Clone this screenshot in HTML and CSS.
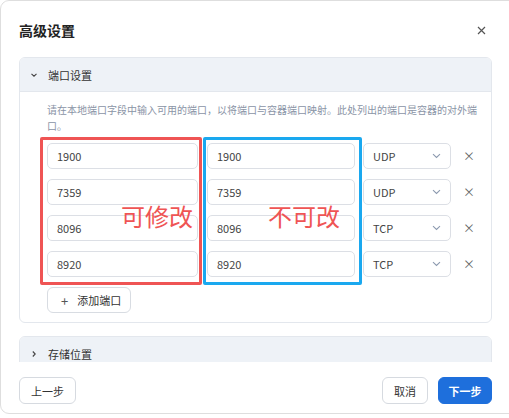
FILE: index.html
```html
<!DOCTYPE html>
<html lang="zh-CN">
<head>
<meta charset="utf-8">
<title>高级设置</title>
<link rel="stylesheet" href="styles.css">
</head>
<body>
<div class="dialog">
  <div class="dlg-head">
    <h1 class="title">高级设置</h1>
    <button class="close" aria-label="关闭">
      <svg width="9" height="9" viewBox="0 0 9 9"><path d="M1 1L8 8M8 1L1 8" stroke="#555" stroke-width="1.2" fill="none"/></svg>
    </button>
  </div>
  <div class="content">
    <section class="panel">
      <div class="panel-head">
        <svg class="chev" width="8" height="8" viewBox="0 0 8 8"><path d="M1.5 2.8L4 5.2L6.5 2.8" stroke="#444" stroke-width="1.1" fill="none"/></svg>
        <span>端口设置</span>
      </div>
      <div class="panel-body">
        <p class="desc">请在本地端口字段中输入可用的端口，以将端口与容器端口映射。此处列出的端口是容器的对外端口。</p>
        <div class="rows">
          <div class="row">
            <div class="input in1">1900</div>
            <div class="input in2">1900</div>
            <div class="select"><span>UDP</span><svg width="9" height="6" viewBox="0 0 9 6"><path d="M1 1.2L4.5 4.5L8 1.2" stroke="#8d9bb0" stroke-width="1.1" fill="none"/></svg></div>
            <span class="del">×</span>
          </div>
          <div class="row">
            <div class="input in1">7359</div>
            <div class="input in2">7359</div>
            <div class="select"><span>UDP</span><svg width="9" height="6" viewBox="0 0 9 6"><path d="M1 1.2L4.5 4.5L8 1.2" stroke="#8d9bb0" stroke-width="1.1" fill="none"/></svg></div>
            <span class="del">×</span>
          </div>
          <div class="row">
            <div class="input in1">8096</div>
            <div class="input in2">8096</div>
            <div class="select"><span>TCP</span><svg width="9" height="6" viewBox="0 0 9 6"><path d="M1 1.2L4.5 4.5L8 1.2" stroke="#8d9bb0" stroke-width="1.1" fill="none"/></svg></div>
            <span class="del">×</span>
          </div>
          <div class="row">
            <div class="input in1">8920</div>
            <div class="input in2">8920</div>
            <div class="select"><span>TCP</span><svg width="9" height="6" viewBox="0 0 9 6"><path d="M1 1.2L4.5 4.5L8 1.2" stroke="#8d9bb0" stroke-width="1.1" fill="none"/></svg></div>
            <span class="del">×</span>
          </div>
        </div>
        <button class="add"><span class="plus">+</span>添加端口</button>
      </div>
    </section>
    <section class="panel panel2">
      <div class="panel-head">
        <svg class="chev" width="8" height="8" viewBox="0 0 8 8"><path d="M2.8 1.5L5.2 4L2.8 6.5" stroke="#444" stroke-width="1.1" fill="none"/></svg>
        <span>存储位置</span>
      </div>
    </section>
  </div>
  <div class="footer">
    <button class="btn btn-prev">上一步</button>
    <div class="right">
      <button class="btn btn-cancel">取消</button>
      <button class="btn primary">下一步</button>
    </div>
  </div>

  <div class="mark mark-red"></div>
  <div class="mark mark-blue"></div>
  <div class="label label-red">可修改</div>
  <div class="label label-blue">不可改</div>
</div>
</body>
</html>
```

FILE: styles.css
```css
* { box-sizing: border-box; }
html, body { margin: 0; padding: 0; background: #fff; }
body {
  width: 509px;
  height: 418px;
  overflow: hidden;
  font-family: "Noto Sans CJK SC", "Noto Sans", sans-serif;
  color: #333;
}
button { font-family: inherit; }

.dialog {
  position: relative;
  width: 530px;
  height: 414px;
  border: 1px solid #dedede;
  border-radius: 9px;
  background: #fff;
}

.dlg-head {
  height: 56px;
  padding: 19px 18px 0 18px;
  display: flex;
  justify-content: space-between;
  align-items: flex-start;
  width: 508px;
}
.title {
  margin: 0;
  font-size: 14px;
  line-height: 20px;
  font-weight: 700;
  color: #222;
}
.close {
  border: 0;
  background: none;
  padding: 0;
  margin-top: 6px;
  margin-right: 5px;
  width: 9px;
  height: 9px;
  display: block;
}
.close svg { display: block; }

.content {
  width: 508px;
  height: 305px;
  overflow: hidden;
  padding: 0 17px 0 18px;
}

.panel {
  border: 1px solid #e3e7ed;
  border-radius: 6px;
  background: #fff;
  overflow: hidden;
}
.panel-head {
  height: 34px;
  background: #eef2f7;
  display: flex;
  align-items: center;
  padding-left: 10px;
  font-size: 11px;
  color: #333;
}
.panel .panel-head { border-bottom: 1px solid #e3e7ed; }
.panel2 { margin-top: 13px; }
.chev { display: block; margin-right: 10px; }

.panel-body {
  padding: 10px 0 9px 27px;
}
.desc {
  margin: 0;
  width: 436px;
  font-size: 10px;
  line-height: 16px;
  color: #8a94a6;
}
.rows {
  margin-top: 9px;
  display: flex;
  flex-direction: column;
  gap: 10px;
}
.row {
  display: flex;
  align-items: center;
  height: 26px;
}
.input, .select {
  height: 26px;
  border: 1px solid #dcdfe5;
  border-radius: 5px;
  display: flex;
  align-items: center;
  padding-left: 9px;
  font-size: 11px;
  color: #444;
  background: #fff;
}
.in1 { width: 151px; }
.in2 { width: 148px; margin-left: 9px; }
.select {
  width: 88px;
  margin-left: 8px;
  justify-content: space-between;
  padding-right: 9px;
}
.select svg { display: block; }
.del {
  width: 36px;
  text-align: center;
  font-size: 12px;
  color: #666;
  line-height: 26px;
}

.add {
  margin-top: 10px;
  height: 26px;
  width: 84px;
  border: 1px solid #d8dce2;
  border-radius: 6px;
  background: #fff;
  font-size: 11px;
  color: #333;
  display: flex;
  align-items: center;
  padding: 0 0 0 13px;
}
.plus {
  font-size: 13px;
  margin-right: 9px;
  color: #555;
}

.footer {
  width: 508px;
  padding: 15px 17px 0 18px;
  display: flex;
  justify-content: space-between;
}
.right { display: flex; gap: 10px; }
.btn {
  height: 27px;
  padding: 0;
  border: 1px solid #d6dae0;
  border-radius: 6px;
  background: #fff;
  font-size: 11px;
  color: #333;
  text-align: center;
}
.btn-prev { width: 57px; }
.btn-cancel { width: 46px; }
.primary {
  width: 54px;
  background: #1e6fdc;
  border-color: #1e6fdc;
  color: #fff;
  font-weight: 700;
}

.mark {
  position: absolute;
  top: 136px;
  height: 148px;
  border: 3px solid;
  border-radius: 2px;
}
.mark-red { left: 39px; width: 162px; border-color: #ef5454; }
.mark-blue { left: 202px; width: 159px; border-color: #1aa8ef; }
.label {
  position: absolute;
  top: 199px;
  font-size: 24px;
  line-height: 32px;
}
.label-red { left: 120px; color: #ef5454; }
.label-blue { left: 267px; color: #ef5454; }
```
